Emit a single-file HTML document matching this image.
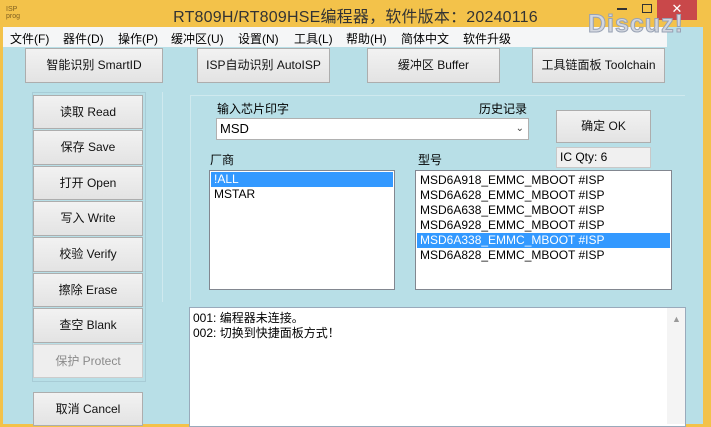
<!DOCTYPE html>
<html><head><meta charset="utf-8"><style>
*{margin:0;padding:0;box-sizing:border-box}
body{width:711px;height:424px;overflow:hidden;background:#f3c24a;font-family:"Liberation Sans","Noto Sans CJK SC",sans-serif;font-size:12px;color:#000;position:relative}
.a{position:absolute}
.m{position:absolute;top:30px;font-size:12px}
.btn{position:absolute;background:linear-gradient(#f2f2f2,#e3e3e3);border:1px solid #adadad;text-align:center;font-size:12px;color:#111}
.lst{position:absolute;background:#fff;border:1px solid #828790}
.row{height:15px;line-height:15px;padding-left:3px;font-size:12px;white-space:nowrap}
.sel{background:#3399ff;color:#fff}
</style></head><body>
<div class="a" style="left:0;top:0;width:711px;height:27px;background:#f3c24a"></div>
<div class="a" style="left:6px;top:6px;font-size:7px;color:#806020;line-height:7px">ISP<br>prog</div>
<div class="a" style="left:0;top:3px;width:711px;text-align:center;font-size:16px;color:#333;letter-spacing:0.2px">RT809H/RT809HSE编程器，软件版本：20240116</div>
<div class="a" style="left:617px;top:8px;width:10px;height:2px;background:#333"></div>
<div class="a" style="left:642px;top:4px;width:10px;height:9px;border:1px solid #333"></div>
<div class="a" style="left:657px;top:0;width:40px;height:20px;background:#c9484a;color:#fff;text-align:center;font-size:13px;line-height:18px">✕</div>
<div class="a" style="left:3px;top:27px;width:700px;height:397px;background:#b8dfe7"></div>
<div class="a" style="left:3px;top:27px;width:664px;height:20px;background:#f5f6f7"></div>
<div class="m" style="left:10px">文件(F)</div>
<div class="m" style="left:63px">器件(D)</div>
<div class="m" style="left:118px">操作(P)</div>
<div class="m" style="left:171px">缓冲区(U)</div>
<div class="m" style="left:238px">设置(N)</div>
<div class="m" style="left:294px">工具(L)</div>
<div class="m" style="left:346px">帮助(H)</div>
<div class="m" style="left:401px">简体中文</div>
<div class="m" style="left:463px">软件升级</div>
<div class="a" style="left:588px;top:10px;font-size:25px;font-weight:bold;color:#d3d7e0;-webkit-text-stroke:1px #98a2b4;letter-spacing:1px">Discuz!</div>
<div class="btn" style="left:25px;top:48px;width:138px;height:35px;line-height:33px">智能识别 SmartID</div>
<div class="btn" style="left:197px;top:48px;width:133px;height:35px;line-height:33px">ISP自动识别 AutoISP</div>
<div class="btn" style="left:367px;top:48px;width:133px;height:35px;line-height:33px">缓冲区 Buffer</div>
<div class="btn" style="left:532px;top:48px;width:133px;height:35px;line-height:33px">工具链面板 Toolchain</div>
<div class="a" style="left:32px;top:92px;width:114px;height:290px;border:1px solid #a8ccd6"></div>
<div class="btn" style="left:33px;top:95px;width:110px;height:34px;line-height:32px">读取 Read</div>
<div class="btn" style="left:33px;top:130px;width:110px;height:35px;line-height:33px">保存 Save</div>
<div class="btn" style="left:33px;top:166px;width:110px;height:34px;line-height:32px">打开 Open</div>
<div class="btn" style="left:33px;top:201px;width:110px;height:35px;line-height:33px">写入 Write</div>
<div class="btn" style="left:33px;top:237px;width:110px;height:35px;line-height:33px">校验 Verify</div>
<div class="btn" style="left:33px;top:273px;width:110px;height:34px;line-height:32px">擦除 Erase</div>
<div class="btn" style="left:33px;top:308px;width:110px;height:35px;line-height:33px">查空 Blank</div>
<div class="btn" style="left:33px;top:344px;width:110px;height:34px;line-height:32px;color:#8a8a8a;border-color:#ccc;background:#eeeeee">保护 Protect</div>
<div class="btn" style="left:33px;top:392px;width:110px;height:34px;line-height:32px">取消 Cancel</div>
<div class="a" style="left:162px;top:92px;width:1px;height:210px;background:#cfe9ee"></div>
<div class="a" style="left:190px;top:95px;width:495px;height:205px;border:1px solid #cfe9ee;border-right:none;border-bottom:none"></div>
<div class="a" style="left:217px;top:100px">输入芯片印字</div>
<div class="a" style="left:479px;top:100px">历史记录</div>
<div class="a" style="left:216px;top:118px;width:313px;height:22px;background:#fff;border:1px solid #b0b0b0;line-height:20px;padding-left:3px;font-size:13px">MSD<span style="position:absolute;right:4px;top:0;font-size:10px;color:#444">&#8964;</span></div>
<div class="btn" style="left:556px;top:110px;width:95px;height:33px;line-height:31px">确定 OK</div>
<div class="a" style="left:556px;top:147px;width:95px;height:21px;background:#f0f0f0;border:1px solid #c8c8c8;line-height:19px;padding-left:3px">IC Qty: 6</div>
<div class="a" style="left:210px;top:151px">厂商</div>
<div class="a" style="left:418px;top:151px">型号</div>
<div class="lst" style="left:209px;top:170px;width:186px;height:120px;padding:1px">
<div class="row sel">!ALL</div><div class="row">MSTAR</div></div>
<div class="lst" style="left:415px;top:170px;width:257px;height:120px;padding:2px 1px">
<div class="row">MSD6A918_EMMC_MBOOT #ISP</div>
<div class="row">MSD6A628_EMMC_MBOOT #ISP</div>
<div class="row">MSD6A638_EMMC_MBOOT #ISP</div>
<div class="row">MSD6A928_EMMC_MBOOT #ISP</div>
<div class="row sel">MSD6A338_EMMC_MBOOT #ISP</div>
<div class="row">MSD6A828_EMMC_MBOOT #ISP</div></div>
<div class="a" style="left:189px;top:307px;width:497px;height:120px;background:#fff;border:1px solid #9ab"></div>
<div class="a" style="left:193px;top:311px;line-height:15px;font-size:12px">001: 编程器未连接。<br>002: 切换到快捷面板方式！</div>
<div class="a" style="left:667px;top:308px;width:18px;height:116px;background:#f4f4f4"></div>
<div class="a" style="left:672px;top:314px;font-size:9px;color:#999">▲</div>
</body></html>
